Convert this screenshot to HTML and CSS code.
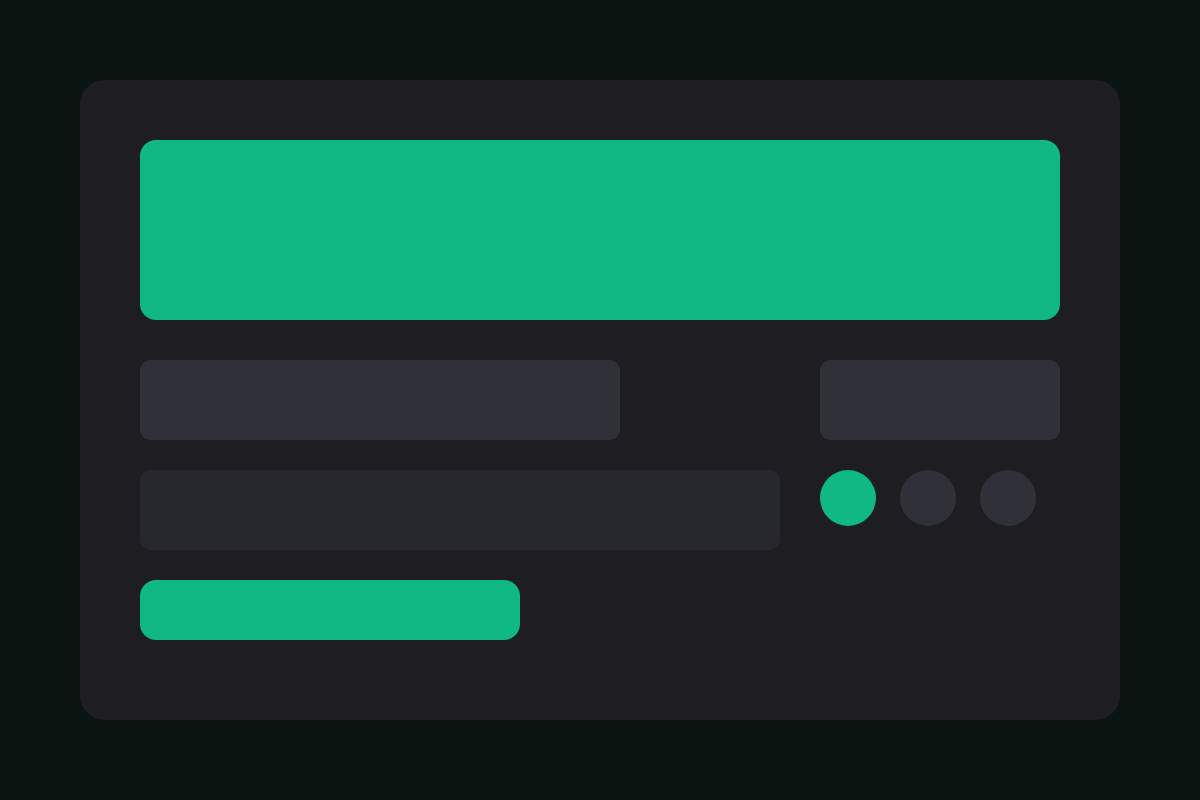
FILE: index.html
```html
<!DOCTYPE html>
<html lang="en">
<head>
  <meta charset="UTF-8" />
  <meta name="viewport" content="width=device-width, initial-scale=1.0" />
  <title>Skeleton Card</title>
  <link rel="stylesheet" href="styles.css">
</head>
<body>
  <div class="card">
    <div class="banner"></div>

    <div class="row row-top">
      <div class="bar bar-wide"></div>
      <div class="bar bar-short"></div>
    </div>

    <div class="row row-mid">
      <div class="bar bar-long"></div>
      <div class="dots">
        <span class="dot dot-active"></span>
        <span class="dot"></span>
        <span class="dot"></span>
      </div>
    </div>

    <div class="button"></div>
  </div>
</body>
</html>
```

FILE: styles.css
```css
:root {
  --bg-color: #0a1411;
  --card-bg: #1d1d22;
  --accent: #10b981;
  --bar: #303038;
  --bar-dim: #27272e;
}
* { box-sizing: border-box; }
html, body {
  margin: 0;
  height: 100%;
}
body {
  background-color: var(--bg-color);
  font-family: 'Inter', 'Liberation Sans', sans-serif;
  padding: 80px;
}
.card {
  width: 1040px;
  height: 640px;
  background: var(--card-bg);
  border-radius: 24px;
  padding: 60px;
}
.banner {
  height: 180px;
  background: var(--accent);
  border-radius: 16px;
}
.row {
  display: flex;
  align-items: flex-start;
}
.row-top {
  justify-content: space-between;
  margin-top: 40px;
}
.row-mid {
  margin-top: 30px;
  gap: 40px;
}
.bar {
  height: 80px;
  background: var(--bar);
  border-radius: 10px;
}
.bar-wide { width: 480px; }
.bar-short { width: 240px; }
.bar-long {
  width: 640px;
  background: var(--bar-dim);
}
.dots {
  display: flex;
  gap: 24px;
}
.dot {
  width: 56px;
  height: 56px;
  border-radius: 50%;
  background: var(--bar);
}
.dot-active { background: var(--accent); }
.button {
  width: 380px;
  height: 60px;
  margin-top: 30px;
  background: var(--accent);
  border-radius: 16px;
}
```
